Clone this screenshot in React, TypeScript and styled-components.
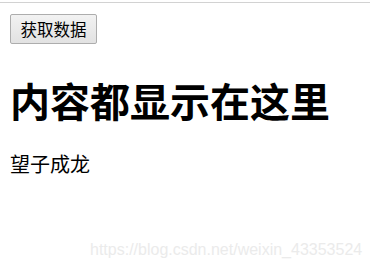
import React from "react";
import styled, { createGlobalStyle } from "styled-components";

const Global = createGlobalStyle`
  html, body { margin: 0; padding: 0; background: #fff; }
  body { font-family: "Noto Sans CJK SC", "Microsoft YaHei", sans-serif; color: #000; }
`;

const Page = styled.div`
  position: relative;
  width: 370px;
  height: 270px;
  overflow: hidden;
  background: #fff;
`;

const TopRule = styled.div`
  margin-top: 2px;
  height: 1px;
  background: #d2d2d2;
`;

const Content = styled.div`
  padding: 0 10px;
  display: flex;
  flex-direction: column;
  align-items: flex-start;
`;

const FetchButton = styled.button`
  margin-top: 11px;
  height: 30px;
  width: 87px;
  padding: 0;
  border: 1px solid #adadad;
  border-radius: 2px;
  background: linear-gradient(#f2f2f2, #e2e2e2);
  font-family: "Noto Sans CJK SC", sans-serif;
  font-size: 16.5px;
  line-height: 28px;
  color: #000;
`;

const Title = styled.h1`
  margin: 32px 0 28px;
  font-size: 40px;
  line-height: 48px;
  font-weight: 700;
  font-family: "Noto Sans CJK SC", sans-serif;
`;

const Text = styled.p`
  margin: 0;
  font-size: 20px;
  line-height: 24px;
  font-family: "Noto Sans CJK SC", sans-serif;
`;

const Watermark = styled.div`
  position: absolute;
  left: 90px;
  top: 240px;
  font-family: "Liberation Sans", Arial, sans-serif;
  font-size: 16px;
  line-height: 20px;
  color: #ebebeb;
  white-space: nowrap;
`;

export default function App() {
  return (
    <Page>
      <Global />
      <TopRule />
      <Content>
        <FetchButton>获取数据</FetchButton>
        <Title>内容都显示在这里</Title>
        <Text>望子成龙</Text>
      </Content>
      <Watermark>https://blog.csdn.net/weixin_43353524</Watermark>
    </Page>
  );
}
